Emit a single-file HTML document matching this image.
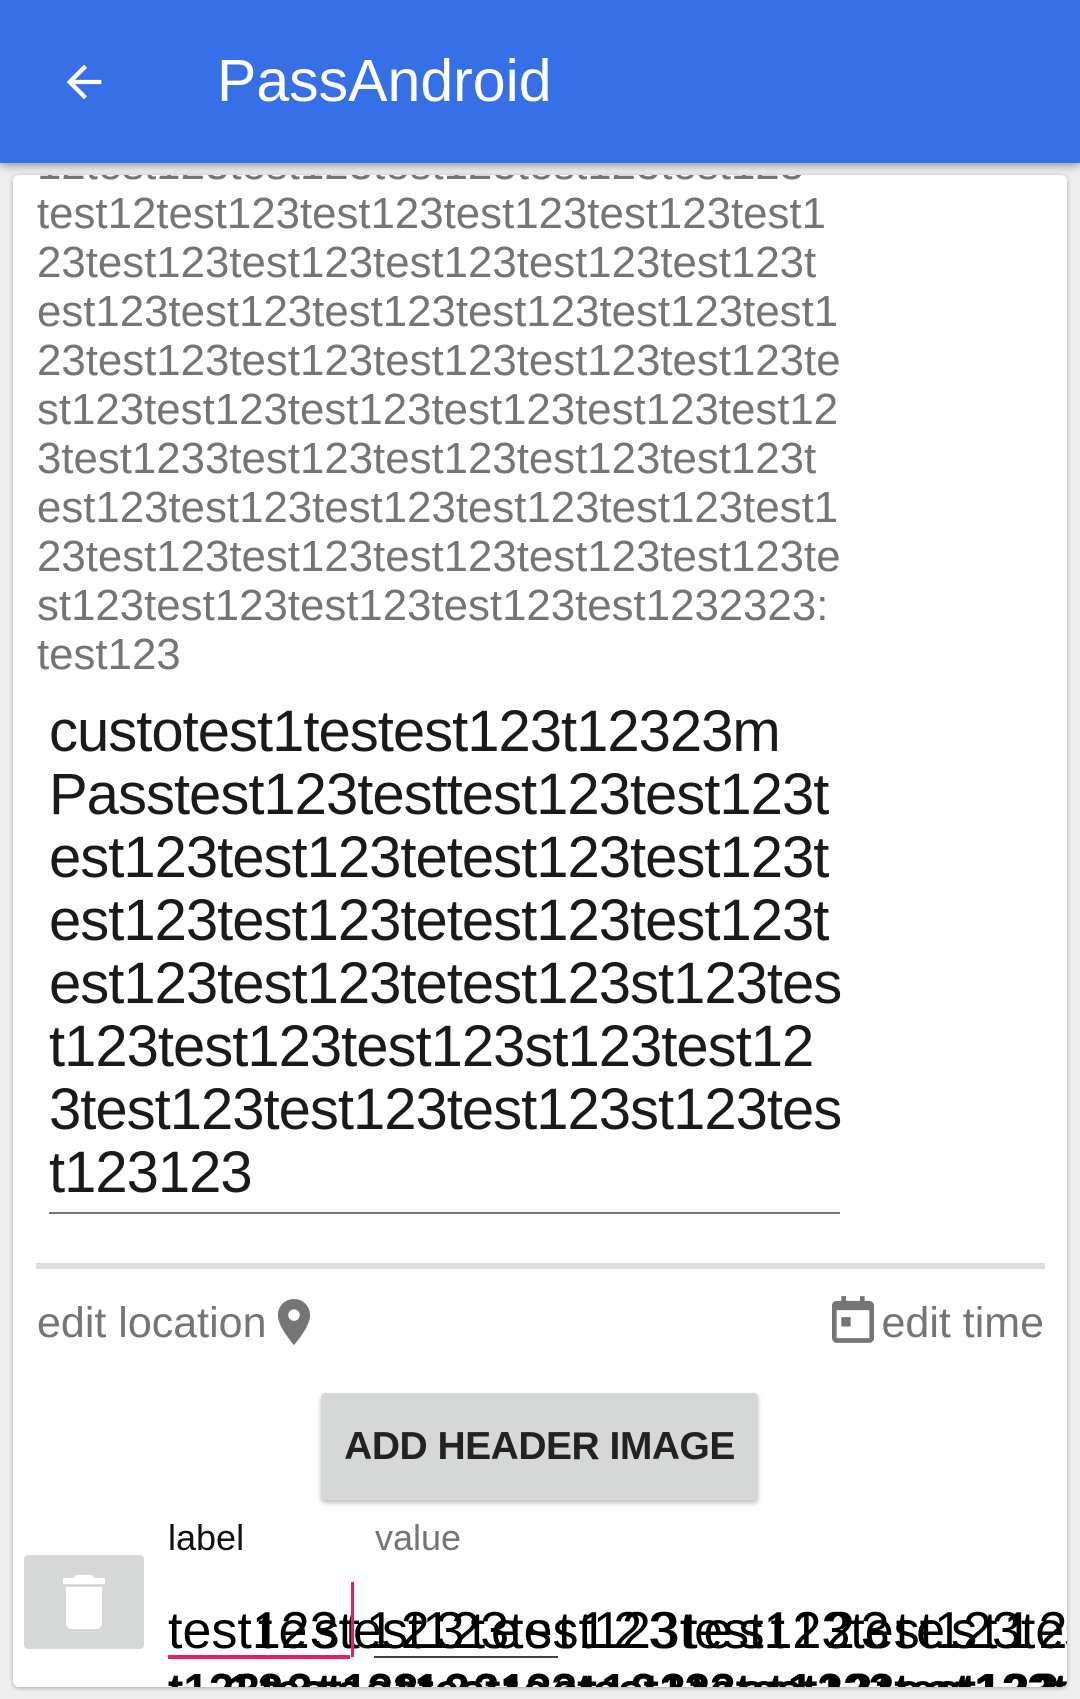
<!DOCTYPE html>
<html><head><meta charset="utf-8"><style>
*{margin:0;padding:0;box-sizing:border-box}
body{width:1080px;height:1699px;overflow:hidden;background:#eeeeee;font-family:"Liberation Sans",sans-serif;position:relative}
.hdr{position:absolute;left:0;top:0;width:1080px;height:163px;background:#376fe7;box-shadow:0 3px 8px rgba(0,0,0,.35);z-index:3}
.title{position:absolute;left:217px;top:48px;font-size:59px;color:#fff;line-height:66px}
.card{position:absolute;left:13px;top:175px;width:1054px;height:1512px;background:#fff;border-radius:6px;box-shadow:0 1px 4px rgba(0,0,0,.3);overflow:hidden}
.gray{position:absolute;left:24px;top:-35px;font-size:43.8px;line-height:49px;color:#757575;white-space:pre}
.blk{position:absolute;left:36px;top:525px;font-size:58px;line-height:63px;color:#1a1a1a;white-space:pre;letter-spacing:-1px}
.ab{position:absolute}
.btn{position:absolute;left:308px;top:1218px;width:437px;height:107px;background:#d6d7d7;border-radius:4px;box-shadow:0 3px 5px rgba(0,0,0,.25);font-size:39px;font-weight:bold;color:#222;text-align:center;line-height:107px;letter-spacing:-.5px}
</style></head><body>
<div class="hdr">
<svg class="ab" style="left:58px;top:56px" width="52" height="52" viewBox="0 0 24 24"><path d="M20 11H7.8l5.6-5.6L12 4l-8 8 8 8 1.4-1.4L7.8 13H20z" fill="#fff"/></svg>
<div class="title">PassAndroid</div>
</div>
<div class="card">
<div class="gray">12test123test123test123test123test123
test12test123test123test123test123test1
23test123test123test123test123test123t
est123test123test123test123test123test1
23test123test123test123test123test123te
st123test123test123test123test123test12
3test1233test123test123test123test123t
est123test123test123test123test123test1
23test123test123test123test123test123te
st123test123test123test123test1232323:
test123</div>
<div class="blk">custotest1testest123t12323m
Passtest123testtest123test123t
est123test123tetest123test123t
est123test123tetest123test123t
est123test123tetest123st123tes
t123test123test123st123test12
3test123test123test123st123tes
t123123</div>
<div class="ab" style="left:36px;top:1037px;width:791px;height:2px;background:#757575"></div>
<div class="ab" style="left:23px;top:1088px;width:1009px;height:6px;background:#dddddd"></div>
<div class="ab" style="left:24px;top:1122px;font-size:43px;color:#757575;line-height:52px">edit location</div>
<svg class="ab" style="left:261px;top:1124px" width="40" height="46" viewBox="5 2 14 20"><path d="M12 2C8.1 2 5 5.1 5 9c0 5.2 7 13 7 13s7-7.8 7-13c0-3.9-3.1-7-7-7zm0 9.5a2.5 2.5 0 1 1 0-5 2.5 2.5 0 0 1 0 5z" fill="#757575"/></svg>
<svg class="ab" style="left:819px;top:1121px" width="42" height="47" viewBox="0 0 18 20"><path d="M4 0h2v2h6V0h2v2h2a2 2 0 0 1 2 2v14a2 2 0 0 1-2 2H2a2 2 0 0 1-2-2V4a2 2 0 0 1 2-2h2zM2 6v12h14V6zm2 3h4v4H4z" fill="#757575"/></svg>
<div class="ab" style="right:23px;top:1122px;font-size:43px;color:#757575;line-height:52px">edit time</div>
<div class="btn">ADD HEADER IMAGE</div>
<div class="ab" style="left:155px;top:1342px;font-size:36px;color:#111;line-height:42px">label</div>
<div class="ab" style="left:362px;top:1342px;font-size:36px;color:#757575;line-height:42px">value</div>
<div class="ab" style="left:11px;top:1380px;width:120px;height:94px;background:#d6d7d7;border-radius:4px"></div>
<svg class="ab" style="left:50px;top:1400px" width="42" height="54" viewBox="5 3 14 18"><path d="M6 19a2 2 0 0 0 2 2h8a2 2 0 0 0 2-2V7H6zM19 4h-3.5l-1-1h-5l-1 1H5v2h14z" fill="#fff"/></svg>
<div class="ab" style="left:155px;top:1418px;width:899px;height:94px;overflow:hidden">
<div class="ab" style="left:0;top:8px;font-size:52px;color:#000;white-space:nowrap;line-height:60px">test123test123test123test123test123tes</div>
<div class="ab" style="left:90px;top:8px;font-size:52px;color:#000;white-space:nowrap;line-height:60px;letter-spacing:6px">test123test123test123test123test12</div>
<div class="ab" style="left:0;top:72px;font-size:46px;font-weight:bold;color:#000;white-space:nowrap;line-height:50px">t123test123test123test123test123test123t</div>
<div class="ab" style="left:60px;top:72px;font-size:46px;font-weight:bold;color:#000;white-space:nowrap;line-height:50px;letter-spacing:4px">123test123test123test123test123test1</div>
</div>
<div class="ab" style="left:338px;top:1407px;width:3px;height:75px;background:#e91e63"></div>
<div class="ab" style="left:155px;top:1480px;width:182px;height:4px;background:#e91e63"></div>
<div class="ab" style="left:361px;top:1481px;width:184px;height:2px;background:#444"></div>
</div>
</body></html>
